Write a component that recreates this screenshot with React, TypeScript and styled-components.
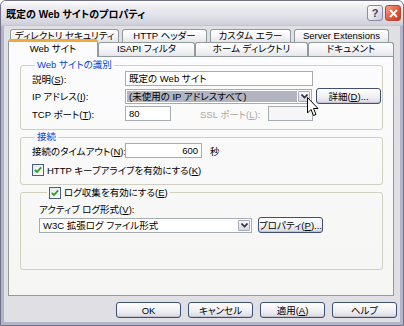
import React from "react";
import styled, { createGlobalStyle } from "styled-components";

// XP silver 風のプロパティ ダイアログ

const GlobalStyle = createGlobalStyle`
  html, body { margin: 0; padding: 0; background: #ffffff; }
  body {
    font-family: "Liberation Sans", "Noto Sans CJK JP", sans-serif;
    font-size: 9.5px;
    color: #000;
    font-feature-settings: "palt";
  }
  * { box-sizing: border-box; }
`;

const Window = styled.div`
  position: relative;
  width: 404px;
  height: 326px;
  display: flex;
  flex-direction: column;
  background: #b4b4c8;
  border: 1px solid #707088;
  border-radius: 6px 6px 0 0;
  overflow: hidden;
`;

const TitleBar = styled.div`
  height: 25px;
  flex: none;
  display: flex;
  align-items: center;
  padding: 0 2px 0 5px;
  background: linear-gradient(#ffffff 0%, #ececf1 25%, #e2e2e9 60%, #cfcfdb 100%);
  border-bottom: 1px solid #c4c4d2;
`;

const Title = styled.div`
  flex: 1;
  font-weight: bold;
  font-size: 10px;
`;

const TitleButton = styled.div<{ $close?: boolean }>`
  width: 16px;
  height: 16px;
  margin-left: 2px;
  border-radius: 3px;
  border: 1px solid ${(p) => (p.$close ? "#b04a30" : "#8a8aa4")};
  background: ${(p) =>
    p.$close
      ? "linear-gradient(135deg, #f4a58c, #e3583a 55%, #c8391e)"
      : "linear-gradient(135deg, #ffffff, #e2e2ea 60%, #c2c2d2)"};
  display: flex;
  align-items: center;
  justify-content: center;
  color: #404060;
  font-weight: bold;
  font-size: 11px;
  line-height: 1;
`;

const Client = styled.div`
  flex: 1;
  margin: 0 3px 3px;
  background: #e0dfe3;
  padding: 3px 0 0 4px;
  display: flex;
  flex-direction: column;
`;

const TabRow = styled.div<{ $back?: boolean }>`
  display: flex;
  height: ${(p) => (p.$back ? 13 : 14)}px;
  gap: ${(p) => (p.$back ? 3 : 0)}px;
  margin-left: ${(p) => (p.$back ? 2 : 0)}px;
  align-items: flex-end;
`;

const Tab = styled.div<{ $w: number; $active?: boolean }>`
  position: relative;
  width: ${(p) => p.$w}px;
  height: ${(p) => (p.$active ? "18px" : "100%")};
  margin-bottom: ${(p) => (p.$active ? -1 : 0)}px;
  z-index: ${(p) => (p.$active ? 2 : 0)};
  border: 1px solid #919b9c;
  border-bottom: none;
  border-top: ${(p) => (p.$active ? "3px solid #f2a93b" : "1px solid #919b9c")};
  border-radius: 3px 3px 0 0;
  background: ${(p) =>
    p.$active ? "#fcfcfe" : "linear-gradient(#ffffff, #f3f3f6 60%, #e4e4ea)"};
  text-align: center;
  line-height: ${(p) => (p.$active ? 13 : 11)}px;
  white-space: nowrap;
`;

const Page = styled.div`
  width: 386px;
  height: 240px;
  border: 1px solid #919b9c;
  background: linear-gradient(#fcfcfe, #f5f5f3);
  padding: 2px 10px 0 11px;
  display: flex;
  flex-direction: column;
  gap: 1px;
`;

const Group = styled.fieldset<{ $h: number; $pl?: number }>`
  margin: 0;
  height: ${(p) => p.$h}px;
  border: 1px solid #d0d0bf;
  border-radius: 3px;
  padding: 0 8px 0 ${(p) => p.$pl ?? 11}px;
  min-width: 0;
`;

const Legend = styled.legend`
  color: #0046d5;
  padding: 0 2px;
  margin-left: 3px;
  height: 12px;
  line-height: 12px;
  display: flex;
  align-items: center;
  gap: 3px;
`;

const CheckLegend = styled(Legend)`
  color: #000;
  height: 13px;
  margin-left: 8px;
`;

const FormGrid = styled.div`
  display: grid;
  grid-template-columns: 93px auto;
  row-gap: 2px;
  align-items: center;
`;

const Label = styled.span<{ $disabled?: boolean }>`
  color: ${(p) => (p.$disabled ? "#aca899" : "#000")};
  white-space: nowrap;
`;

const Line = styled.div<{ $gap?: number }>`
  display: flex;
  align-items: center;
  gap: ${(p) => p.$gap ?? 0}px;
`;

const TextBox = styled.div<{ $w: number; $right?: boolean; $disabled?: boolean }>`
  width: ${(p) => p.$w}px;
  height: 15px;
  border: 1px solid #a5acb2;
  background: ${(p) => (p.$disabled ? "#f6f6f6" : "#ffffff")};
  padding: 0 3px;
  line-height: 13px;
  text-align: ${(p) => (p.$right ? "right" : "left")};
  white-space: nowrap;
  overflow: hidden;
`;

const Combo = styled.div<{ $w: number }>`
  width: ${(p) => p.$w}px;
  height: 15px;
  border: 1px solid #a5acb2;
  background: #ffffff;
  padding: 1px;
  display: flex;
  gap: 1px;
`;

const ComboText = styled.div<{ $selected?: boolean }>`
  flex: 1;
  padding: 0 2px;
  line-height: 11px;
  white-space: nowrap;
  overflow: hidden;
  background: ${(p) => (p.$selected ? "#b2b4bf" : "transparent")};
`;

const DropButton = styled.div`
  width: 12px;
  border: 1px solid #a8a8be;
  border-radius: 1px;
  background: linear-gradient(#f6f6fa, #d6d6e2);
  display: flex;
  align-items: center;
  justify-content: center;
`;

const Button = styled.div<{ $w: number }>`
  width: ${(p) => p.$w}px;
  height: 16px;
  border: 1px solid #3d4f73;
  border-radius: 3px;
  background: linear-gradient(#ffffff, #f0f0f4 55%, #d9d9e3);
  box-shadow: inset 0 -1px 0 #c2c2d2;
  display: flex;
  align-items: center;
  justify-content: center;
  white-space: nowrap;
`;

const CheckBox = styled.div`
  width: 12px;
  height: 12px;
  border: 1px solid #4a5d82;
  background: linear-gradient(135deg, #e6e6ee, #ffffff);
  display: flex;
  align-items: center;
  justify-content: center;
  flex: none;
`;

const Unit = styled.span`
  margin-left: 8px;
`;

const ButtonBar = styled.div`
  display: flex;
  justify-content: flex-end;
  gap: 7px;
  padding: 6px 3px 0 0;
`;

const Cursor = styled.svg`
  position: absolute;
  left: 306px;
  top: 96px;
`;

const Chevron = () => (
  <svg width="7" height="5" viewBox="0 0 7 5">
    <path d="M0.5 0.5 L3.5 3.5 L6.5 0.5" fill="none" stroke="#303040" strokeWidth="1.6" />
  </svg>
);

const Check = () => (
  <CheckBox>
    <svg width="8" height="8" viewBox="0 0 8 8">
      <path d="M0.8 3.8 L3 6 L7.2 1.4" fill="none" stroke="#21a121" strokeWidth="1.8" />
    </svg>
  </CheckBox>
);

export default function App() {
  return (
    <>
      <GlobalStyle />
      <Window>
        <TitleBar>
          <Title>既定の Web サイトのプロパティ</Title>
          <TitleButton>?</TitleButton>
          <TitleButton $close>
            <svg width="9" height="9" viewBox="0 0 9 9">
              <path d="M1 1 L8 8 M8 1 L1 8" stroke="#ffffff" strokeWidth="2" />
            </svg>
          </TitleButton>
        </TitleBar>
        <Client>
          <TabRow $back>
            <Tab $w={109}>ディレクトリ セキュリティ</Tab>
            <Tab $w={85}>HTTP ヘッダー</Tab>
            <Tab $w={81}>カスタム エラー</Tab>
            <Tab $w={95}>Server Extensions</Tab>
          </TabRow>
          <TabRow>
            <Tab $w={90} $active>
              Web サイト
            </Tab>
            <Tab $w={97}>ISAPI フィルタ</Tab>
            <Tab $w={113}>ホーム ディレクトリ</Tab>
            <Tab $w={86}>ドキュメント</Tab>
          </TabRow>
          <Page>
            <Group $h={71}>
              <Legend>Web サイトの識別</Legend>
              <FormGrid>
                <Label>
                  説明(<u>S</u>):
                </Label>
                <TextBox $w={188}>既定の Web サイト</TextBox>
                <Label>
                  IP アドレス(<u>I</u>):
                </Label>
                <Line $gap={4}>
                  <Combo $w={187}>
                    <ComboText $selected>(未使用の IP アドレスすべて)</ComboText>
                    <DropButton>
                      <Chevron />
                    </DropButton>
                  </Combo>
                  <Button $w={65}>
                    詳細(<u>D</u>)...
                  </Button>
                </Line>
                <Label>
                  TCP ポート(<u>T</u>):
                </Label>
                <Line>
                  <TextBox $w={46}>80</TextBox>
                  <Label $disabled style={{ marginLeft: 29, width: 68 }}>
                    SSL ポート(<u>L</u>):
                  </Label>
                  <TextBox $w={45} $disabled />
                </Line>
              </FormGrid>
            </Group>
            <Group $h={54}>
              <Legend>接続</Legend>
              <FormGrid>
                <Label>
                  接続のタイムアウト(<u>N</u>):
                </Label>
                <Line>
                  <TextBox $w={77} $right>
                    600
                  </TextBox>
                  <Unit>秒</Unit>
                </Line>
              </FormGrid>
              <Line $gap={3} style={{ marginTop: 5 }}>
                <Check />
                <Label>
                  HTTP キープアライブを有効にする(<u>K</u>)
                </Label>
              </Line>
            </Group>
            <Group $h={84} $pl={18}>
              <CheckLegend>
                <Check />
                <Label>
                  ログ収集を有効にする(<u>E</u>)
                </Label>
              </CheckLegend>
              <Label style={{ display: "block", lineHeight: "15px", marginTop: 3 }}>
                アクティブ ログ形式(<u>V</u>):
              </Label>
              <Line $gap={6}>
                <Combo $w={213}>
                  <ComboText>W3C 拡張ログ ファイル形式</ComboText>
                  <DropButton>
                    <Chevron />
                  </DropButton>
                </Combo>
                <Button $w={65}>
                  プロパティ(<u>P</u>)...
                </Button>
              </Line>
            </Group>
          </Page>
          <ButtonBar>
            <Button $w={65}>OK</Button>
            <Button $w={65}>キャンセル</Button>
            <Button $w={65}>
              適用(<u>A</u>)
            </Button>
            <Button $w={65}>ヘルプ</Button>
          </ButtonBar>
        </Client>
        <Cursor width="12" height="20" viewBox="0 0 12 20">
          <path
            d="M0.5 0.5 L0.5 16 L4 12.5 L6.5 18.5 L9 17.5 L6.5 11.5 L11 11.5 Z"
            fill="#ffffff"
            stroke="#000000"
            strokeWidth="1"
          />
        </Cursor>
      </Window>
    </>
  );
}
